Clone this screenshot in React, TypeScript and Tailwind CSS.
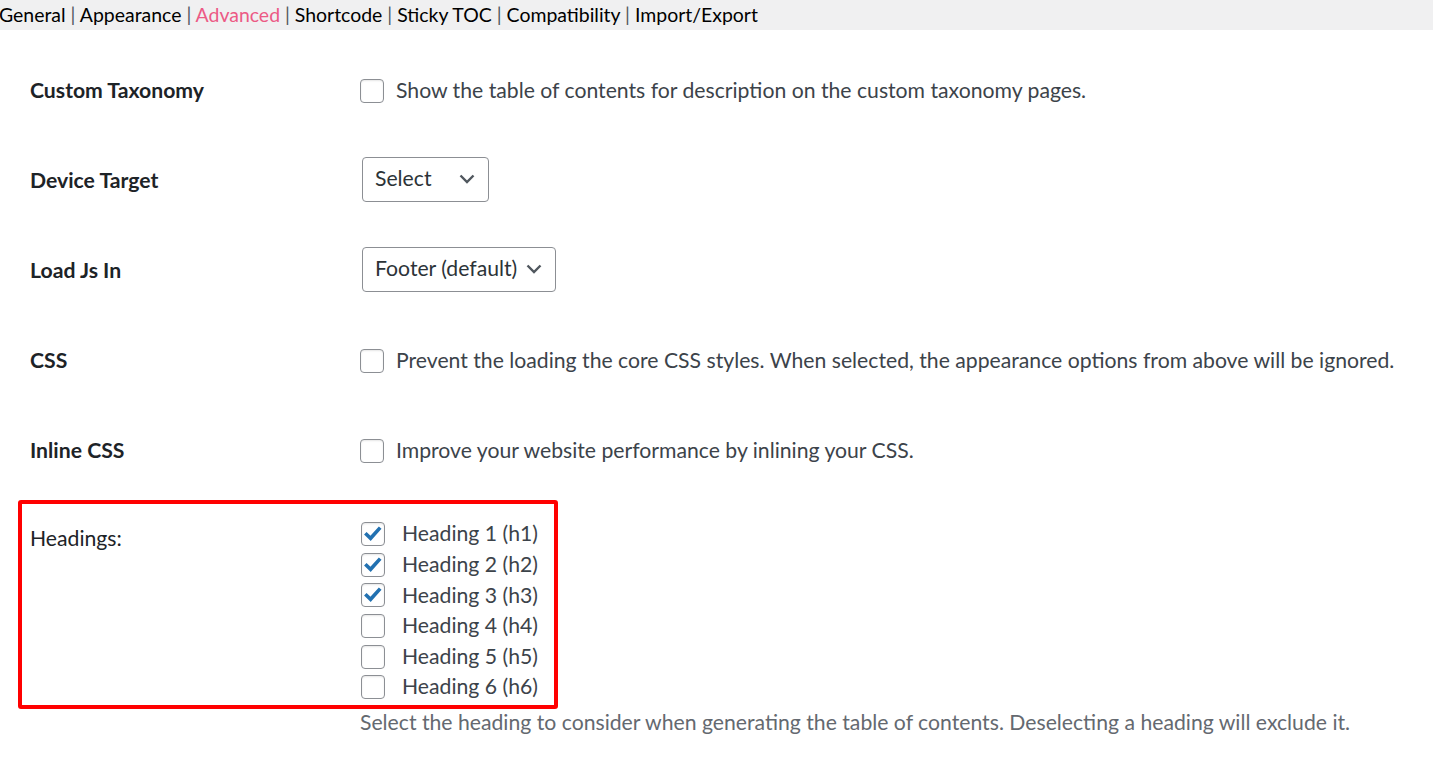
import type { ReactNode } from "react";

const tabs = ["General", "Appearance", "Advanced", "Shortcode", "Sticky TOC", "Compatibility", "Import/Export"];

const headings = [
  { label: "Heading 1 (h1)", checked: true },
  { label: "Heading 2 (h2)", checked: true },
  { label: "Heading 3 (h3)", checked: true },
  { label: "Heading 4 (h4)", checked: false },
  { label: "Heading 5 (h5)", checked: false },
  { label: "Heading 6 (h6)", checked: false },
];

function Checkbox({ checked = false }: { checked?: boolean }) {
  return (
    <span className="relative h-6 w-6 shrink-0 rounded-[4px] border border-[#8c8f94] bg-white shadow-[inset_0_1px_2px_rgba(0,0,0,0.1)]">
      {checked && (
        <svg className="absolute -left-px -top-px" width="24" height="24" viewBox="0 0 24 24" fill="none">
          <path d="M4.3 11.2 L9.6 16.3 L19.2 5.6" stroke="#2271b1" strokeWidth="3.6" />
        </svg>
      )}
    </span>
  );
}

function Select({ value, width }: { value: string; width: string }) {
  return (
    <div
      className={`flex h-[45px] items-center justify-between rounded-[4px] border border-[#8c8f94] bg-white pl-[12px] pr-[13px] text-[#2c3338] ${width}`}
    >
      <span>{value}</span>
      <svg width="16" height="10" viewBox="0 0 16 10" fill="none">
        <path d="M1.5 1.5 L8 8 L14.5 1.5" stroke="#50575e" strokeWidth="2.4" />
      </svg>
    </div>
  );
}

function Row({ label, children }: { label: string; children: ReactNode }) {
  return (
    <div className="flex h-[90px] items-center pl-[30px]">
      <div className="w-[330px] font-bold text-[#1d2327]">{label}</div>
      <div className="flex items-center">{children}</div>
    </div>
  );
}

function CheckOption({ text }: { text: string }) {
  return (
    <label className="flex items-center gap-3 text-[#3c434a]">
      <Checkbox />
      <span>{text}</span>
    </label>
  );
}

export default function App() {
  return (
    <div className="min-h-screen bg-white font-['Lato',sans-serif] text-[21.2px]">
      {/* tab nav */}
      <div className="flex h-[30px] items-center bg-[#f0f0f1] text-[19.45px] text-black">
        <div className="-ml-[1px] whitespace-pre">
          {tabs.map((t, i) => (
            <span key={t}>
              {i > 0 && <span className="text-[#50575e]"> | </span>}
              <span className={t === "Advanced" ? "text-[#ec5a85]" : ""}>{t}</span>
            </span>
          ))}
        </div>
      </div>

      <div className="pt-[16px]">
        <Row label="Custom Taxonomy">
          <CheckOption text="Show the table of contents for description on the custom taxonomy pages." />
        </Row>
        <Row label="Device Target">
          <div className="-mt-[4px] ml-[2px]">
            <Select value="Select" width="w-[127px]" />
          </div>
        </Row>
        <Row label="Load Js In">
          <div className="-mt-[4px] ml-[2px]">
            <Select value="Footer (default)" width="w-[194px]" />
          </div>
        </Row>
        <Row label="CSS">
          <CheckOption text="Prevent the loading the core CSS styles. When selected, the appearance options from above will be ignored." />
        </Row>
        <Row label="Inline CSS">
          <CheckOption text="Improve your website performance by inlining your CSS." />
        </Row>

        {/* headings, boxed in red */}
        <div className="ml-[18px] mt-[4px] flex w-[540px] rounded-[3px] border-4 border-[#ff0000]">
          <div className="w-[339px] pl-2 pt-[19px] leading-[30px] text-[#1d2327]">Headings:</div>
          <div className="flex flex-col pb-[2px] pt-[15px]">
            {headings.map((h) => (
              <label key={h.label} className="flex h-[30.6px] items-center gap-[17px] text-[#3c434a]">
                <Checkbox checked={h.checked} />
                <span>{h.label}</span>
              </label>
            ))}
          </div>
        </div>
        <p className="ml-[360px] leading-[26px] text-[#646970]">
          Select the heading to consider when generating the table of contents. Deselecting a heading will exclude it.
        </p>
      </div>
    </div>
  );
}
